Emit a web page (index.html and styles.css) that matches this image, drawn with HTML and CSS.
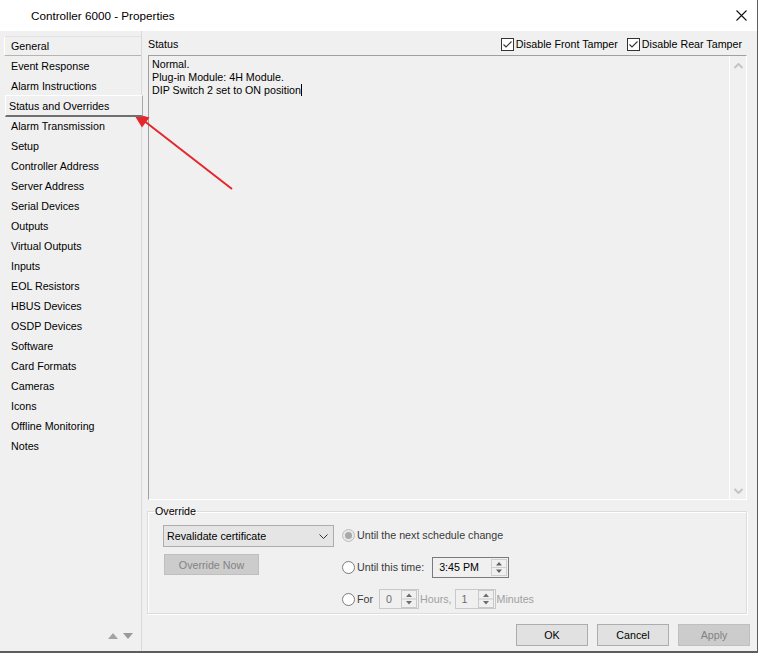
FILE: index.html
```html
<!DOCTYPE html>
<html lang="en">
	<head>
		<meta charset="UTF-8" />
		<meta name="viewport" content="width=device-width, initial-scale=1.0" />
		<title>Controller 6000 - Properties</title>
		<link rel="stylesheet" href="styles.css">
	</head>
	<body>
		<div class="window">
			<div class="titlebar">
				<span class="title">Controller 6000 - Properties</span>
				<svg class="close" width="11" height="11" viewBox="0 0 11 11">
					<path d="M0.5 0.5 L10.5 10.5 M10.5 0.5 L0.5 10.5" stroke="#111" stroke-width="1.1" fill="none" />
				</svg>
			</div>
			<div class="content">
				<nav class="nav">
					<div class="nav-item selected">General</div>
					<div class="nav-item">Event Response</div>
					<div class="nav-item">Alarm Instructions</div>
					<div class="nav-item hover">Status and Overrides</div>
					<div class="nav-item">Alarm Transmission</div>
					<div class="nav-item">Setup</div>
					<div class="nav-item">Controller Address</div>
					<div class="nav-item">Server Address</div>
					<div class="nav-item">Serial Devices</div>
					<div class="nav-item">Outputs</div>
					<div class="nav-item">Virtual Outputs</div>
					<div class="nav-item">Inputs</div>
					<div class="nav-item">EOL Resistors</div>
					<div class="nav-item">HBUS Devices</div>
					<div class="nav-item">OSDP Devices</div>
					<div class="nav-item">Software</div>
					<div class="nav-item">Card Formats</div>
					<div class="nav-item">Cameras</div>
					<div class="nav-item">Icons</div>
					<div class="nav-item">Offline Monitoring</div>
					<div class="nav-item">Notes</div>
					<div class="nav-arrows">
						<svg width="10" height="6" viewBox="0 0 10 6"><path d="M0 6 L10 6 L5 0 Z" fill="#a3a3a3" /></svg>
						<svg width="10" height="6" viewBox="0 0 10 6"><path d="M0 0 L10 0 L5 6 Z" fill="#9a9a9a" /></svg>
					</div>
				</nav>

				<main class="main">
					<div class="status-head">
						<span class="status-label">Status</span>
						<label class="check">
							<svg width="13" height="13" viewBox="0 0 13 13">
								<rect x="0.5" y="0.5" width="12" height="12" fill="#fff" stroke="#333" />
								<path d="M2.5 6.5 L5 9 L10.5 3.5" stroke="#333" stroke-width="1.1" fill="none" />
							</svg>
							Disable Front Tamper
						</label>
						<label class="check">
							<svg width="13" height="13" viewBox="0 0 13 13">
								<rect x="0.5" y="0.5" width="12" height="12" fill="#fff" stroke="#333" />
								<path d="M2.5 6.5 L5 9 L10.5 3.5" stroke="#333" stroke-width="1.1" fill="none" />
							</svg>
							Disable Rear Tamper
						</label>
					</div>

					<div class="status-box">
						<div class="status-text">
							Normal.<br />
							Plug-in Module: 4H Module.<br />
							DIP Switch 2 set to ON position<span class="caret"></span>
						</div>
						<div class="vscroll">
							<svg width="9" height="6" viewBox="0 0 9 6"><path d="M0.5 5 L4.5 1 L8.5 5" stroke="#c4c4c4" stroke-width="2" fill="none" /></svg>
							<svg width="9" height="6" viewBox="0 0 9 6"><path d="M0.5 1 L4.5 5 L8.5 1" stroke="#c4c4c4" stroke-width="2" fill="none" /></svg>
						</div>
					</div>

					<fieldset class="override">
						<legend>Override</legend>
						<div class="override-body">
							<div class="override-left">
								<div class="select">
									<span>Revalidate certificate</span>
									<svg width="9" height="5" viewBox="0 0 9 5"><path d="M0.5 0.5 L4.5 4.5 L8.5 0.5" stroke="#333" fill="none" /></svg>
								</div>
								<div class="btn disabled override-now">Override Now</div>
							</div>
							<div class="override-right">
								<div class="opt">
									<svg class="radio" width="13" height="13" viewBox="0 0 13 13">
										<circle cx="6.5" cy="6.5" r="6" fill="#e8e8e8" stroke="#bcbcbc" />
										<circle cx="6.5" cy="6.5" r="3.5" fill="#a8a8a8" />
									</svg>
									<span>Until the next schedule change</span>
								</div>
								<div class="opt">
									<svg class="radio" width="13" height="13" viewBox="0 0 13 13">
										<circle cx="6.5" cy="6.5" r="6" fill="#fff" stroke="#7a7a7a" />
									</svg>
									<span>Until this time:</span>
									<div class="spin time-box">
										<span class="val">3:45 PM</span>
										<svg width="16" height="17" viewBox="0 0 16 17">
											<rect x="0.5" y="0.5" width="15" height="16" fill="#f0f0f0" stroke="#cfcfcf" />
											<line x1="1" y1="8.5" x2="15" y2="8.5" stroke="#cfcfcf" />
											<path d="M5 6.5 L11 6.5 L8 3 Z" fill="#606060" />
											<path d="M5 10.5 L11 10.5 L8 14 Z" fill="#606060" />
										</svg>
									</div>
								</div>
								<div class="opt">
									<svg class="radio" width="13" height="13" viewBox="0 0 13 13">
										<circle cx="6.5" cy="6.5" r="6" fill="#fff" stroke="#7a7a7a" />
									</svg>
									<span>For</span>
									<div class="spin num-box hours-box">
										<span class="val">0</span>
										<svg width="16" height="18" viewBox="0 0 16 18">
											<rect x="0.5" y="0.5" width="15" height="17" fill="#f0f0f0" stroke="#c9c9c9" />
											<line x1="1" y1="9" x2="15" y2="9" stroke="#c9c9c9" />
											<path d="M5 7 L11 7 L8 3.5 Z" fill="#6d6d6d" />
											<path d="M5 11 L11 11 L8 14.5 Z" fill="#6d6d6d" />
										</svg>
									</div>
									<span class="muted hours-label">Hours,</span>
									<div class="spin num-box minutes-box">
										<span class="val">1</span>
										<svg width="16" height="18" viewBox="0 0 16 18">
											<rect x="0.5" y="0.5" width="15" height="17" fill="#f0f0f0" stroke="#c9c9c9" />
											<line x1="1" y1="9" x2="15" y2="9" stroke="#c9c9c9" />
											<path d="M5 7 L11 7 L8 3.5 Z" fill="#6d6d6d" />
											<path d="M5 11 L11 11 L8 14.5 Z" fill="#6d6d6d" />
										</svg>
									</div>
									<span class="muted minutes-label">Minutes</span>
								</div>
							</div>
						</div>
					</fieldset>

					<div class="dialog-buttons">
						<div class="btn">OK</div>
						<div class="btn">Cancel</div>
						<div class="btn disabled">Apply</div>
					</div>
				</main>
			</div>

			<!-- red callout arrow pointing at the nav item -->
			<svg class="callout" width="759" height="653" viewBox="0 0 759 653">
				<line x1="232" y1="189" x2="143" y2="120" stroke="#e5262b" stroke-width="2" />
				<path d="M133 113 L149.5 117.5 L142 127.5 Z" fill="#e5262b" />
			</svg>
		</div>
	</body>
</html>
```

FILE: styles.css
```css
*{
	padding: 0;
	margin: 0;
	box-sizing: border-box;
}
body {
	background: #fff;
	font-family: "Liberation Sans", Arial, sans-serif;
	font-size: 10.7px;
	color: #000;
}
.window {
	position: relative;
	width: 758px;
	height: 653px;
	display: flex;
	flex-direction: column;
	background: #f0f0f0;
	border-right: 1px solid #5d5d5d;
	border-bottom: 2px solid #5d5d5d;
}
.titlebar {
	height: 31px;
	flex: none;
	display: flex;
	align-items: center;
	justify-content: space-between;
	background: #fff;
	padding: 0 10px 0 31px;
	font-size: 11.7px;
}
.content {
	flex: 1;
	display: flex;
	min-height: 0;
}

/* left page list */
.nav {
	width: 142px;
	flex: none;
	display: flex;
	flex-direction: column;
	padding-top: 5px;
	border-right: 1px solid #d9d9d9;
}
.nav-item {
	height: 20px;
	flex: none;
	display: flex;
	align-items: center;
	padding-left: 11px;
	white-space: nowrap;
}
.nav-item.selected {
	margin-left: 4px;
	padding-left: 6px;
	border-top: 1px solid #e2e2e2;
	border-left: 1px solid #fff;
	border-bottom: 1px solid #b5b5b5;
}
.nav-item.hover {
	position: relative;
	z-index: 1;
	height: 22px;
	margin: -1px -2px -1px 5px;
	padding-left: 3px;
	background: #f0f0f0;
	border-top: 1px solid #fff;
	border-left: 1px solid #fff;
	border-right: 1px solid #a9a9a9;
	border-bottom: 2px solid #6f6f6f;
}
.nav-arrows {
	margin-top: auto;
	display: flex;
	justify-content: flex-end;
	gap: 5px;
	padding: 0 8px 12px 0;
}

/* right side */
.main {
	flex: 1;
	min-width: 0;
	display: flex;
	flex-direction: column;
	padding: 3px 10px 5px 5px;
}
.status-head {
	height: 21px;
	flex: none;
	display: flex;
	align-items: center;
	gap: 9px;
	padding: 0 5px 1px 1px;
}
.status-label {
	margin-right: auto;
}
.check {
	display: flex;
	align-items: center;
	gap: 2px;
}
.status-box {
	height: 445px;
	flex: none;
	margin-left: 1px;
	display: flex;
	border-top: 1px solid #a0a0a0;
	border-left: 1px solid #a0a0a0;
	border-right: 1px solid #fff;
	border-bottom: 1px solid #fff;
}
.status-text {
	flex: 1;
	padding: 2px 3px;
	line-height: 13px;
}
.caret {
	display: inline-block;
	width: 1px;
	height: 12px;
	background: #000;
	vertical-align: -2px;
}
.vscroll {
	width: 17px;
	border-left: 1px solid #fff;
	display: flex;
	flex-direction: column;
	justify-content: space-between;
	align-items: center;
	padding: 7px 0 5px;
}

.override {
	margin-top: 5px;
	height: 109px;
	flex: none;
	border: 1px solid #dcdcdc;
	padding: 0 3px 3px 6px;
	box-shadow: inset 1px 1px 0 #fff, 1px 1px 0 #fff;
}
.override legend {
	padding: 0 1px;
	line-height: 13px;
}
.override-body {
	display: flex;
	gap: 8px;
	padding: 6px 0 0 9px;
}
.override-left {
	width: 171px;
	display: flex;
	flex-direction: column;
	gap: 7px;
	padding-top: 1px;
}
.select {
	height: 22px;
	border: 1px solid #adadad;
	background: #e5e5e5;
	display: flex;
	align-items: center;
	justify-content: space-between;
	padding: 0 5px 0 3px;
}
.override-right {
	display: flex;
	flex-direction: column;
	gap: 10px;
}
.opt {
	height: 22px;
	display: flex;
	align-items: center;
	color: #3a3a3a;
	white-space: nowrap;
}
.radio {
	margin-right: 2px;
}
.spin {
	display: flex;
	align-items: center;
	background: #f0f0f0;
}
.spin .val {
	flex: 1;
	padding-left: 6px;
}
.spin svg {
	margin-right: 1px;
}
.time-box {
	width: 77px;
	height: 21px;
	margin-left: 8px;
	border: 1px solid #7a7a7a;
	color: #000;
}
.num-box {
	width: 40px;
	height: 20px;
	border: 1px solid #c9c9c9;
	color: #6d6d6d;
}
.hours-box {
	margin-left: 6px;
}
.minutes-box {
	width: 41px;
	margin-left: 3px;
}
.muted {
	color: #a0a0a0;
}
.hours-label, .minutes-label {
	margin-left: 1px;
}

.btn {
	width: 72px;
	height: 22px;
	border: 1px solid #adadad;
	background: #e1e1e1;
	display: flex;
	align-items: center;
	justify-content: center;
}
.btn.disabled {
	background: #cccccc;
	border-color: #bfbfbf;
	color: #838383;
}
.override-now {
	width: 95px;
	height: 21px;
	margin-left: 1px;
}
.dialog-buttons {
	margin-top: 10px;
	margin-right: -3px;
	display: flex;
	justify-content: flex-end;
	gap: 9px;
}

.callout {
	position: absolute;
	left: 0;
	top: 0;
	pointer-events: none;
}
```
